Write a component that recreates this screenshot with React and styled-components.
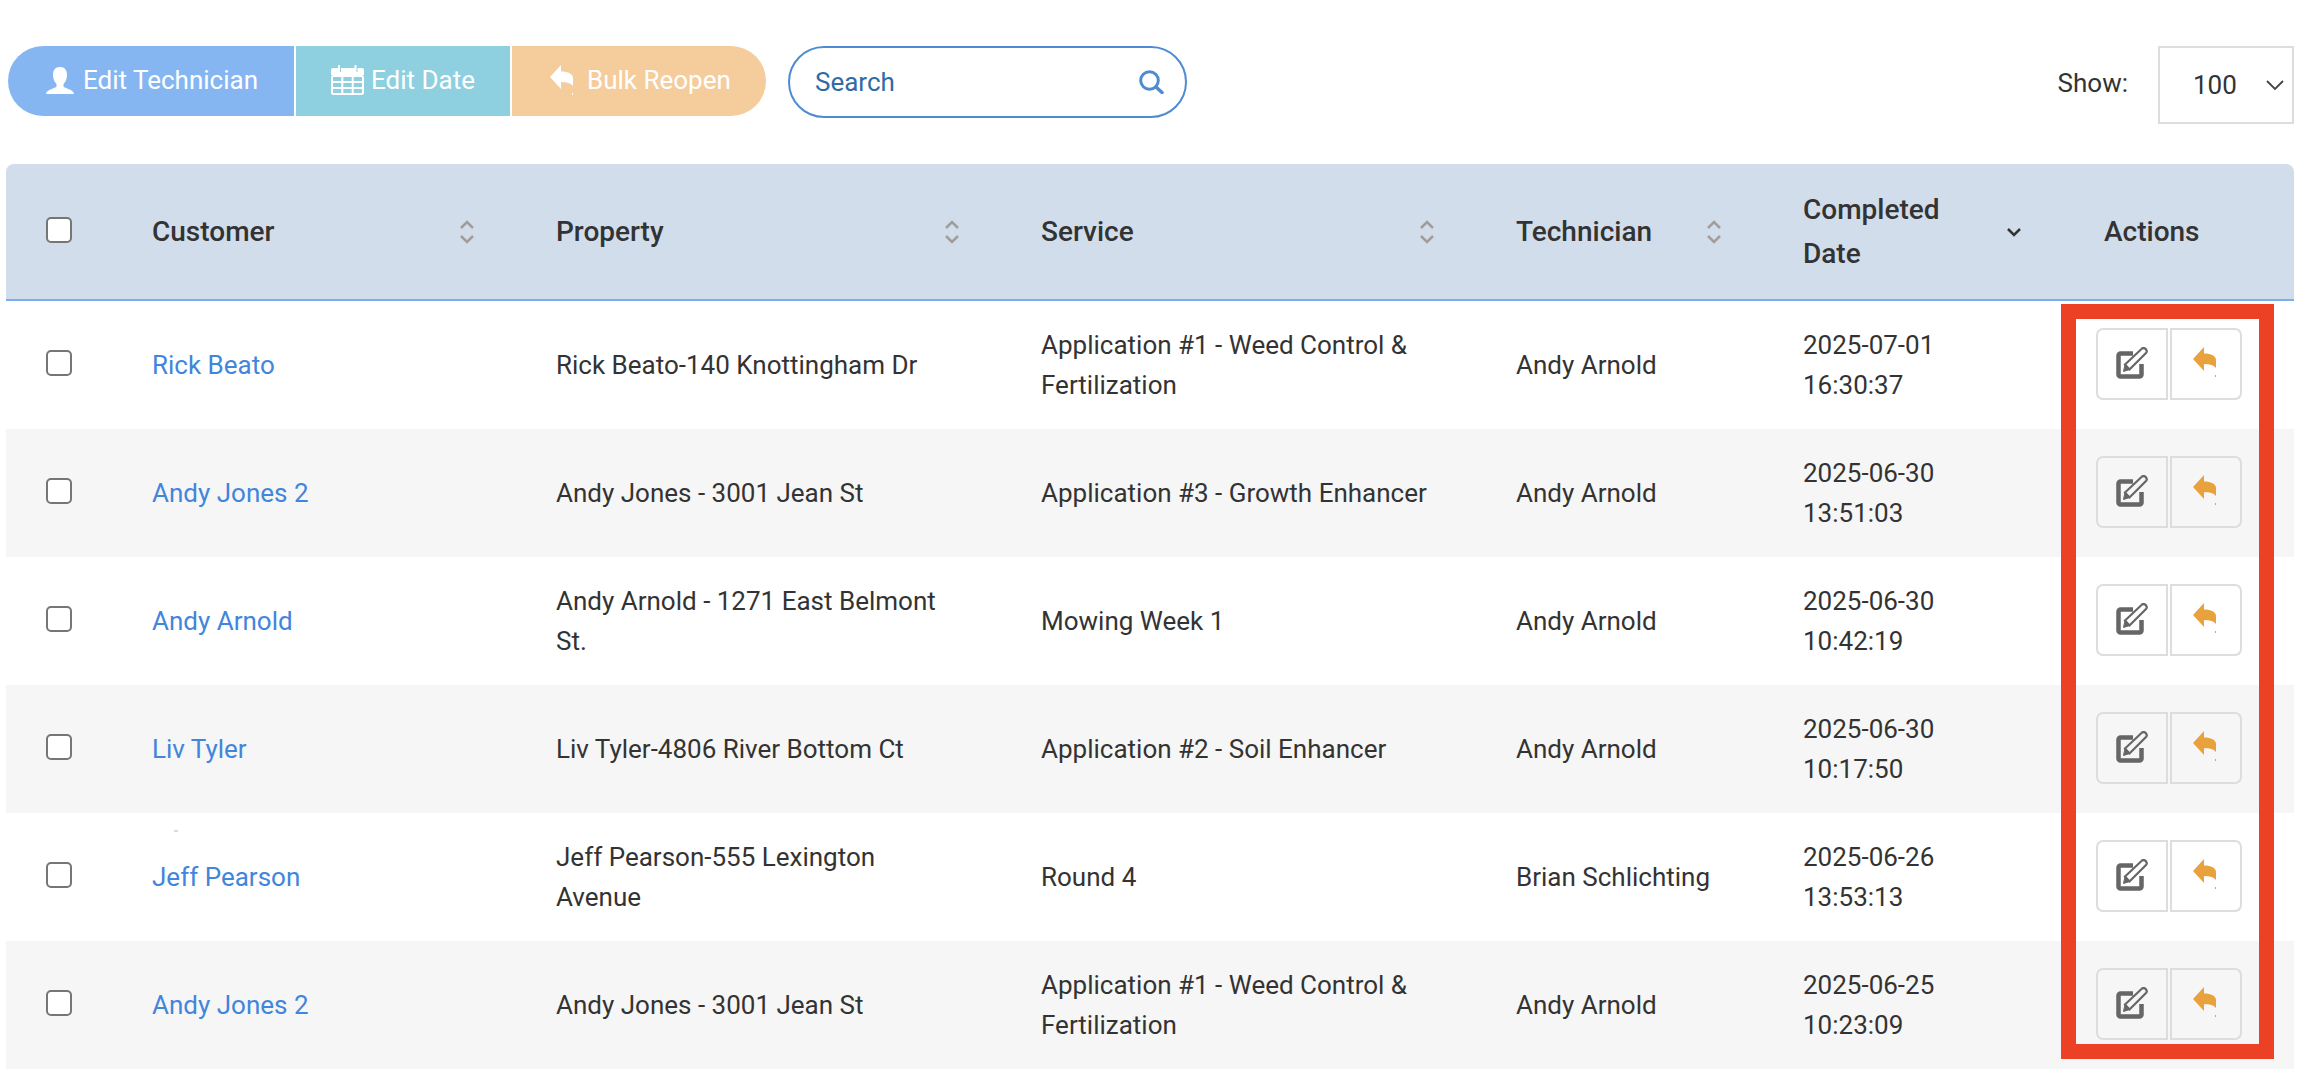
import React from 'react';
import styled, { createGlobalStyle } from 'styled-components';

const GlobalStyle = createGlobalStyle`
  html, body {
    margin: 0;
    background: #fff;
    font-family: Roboto, "Liberation Sans", sans-serif;
    color: #333;
  }
`;

const Page = styled.div`
  position: relative;
  width: 2312px;
  height: 1070px;
  overflow: hidden;
`;

const Toolbar = styled.div`
  display: flex;
  align-items: flex-start;
  height: 118px;
  padding: 46px 18px 0 8px;
  box-sizing: border-box;
`;

const BulkGroup = styled.div`
  display: flex;
  gap: 2px;
  height: 70px;
`;

const BulkButton = styled.button`
  display: flex;
  align-items: center;
  gap: ${(p) => p.$gap}px;
  width: ${(p) => p.$w}px;
  height: 70px;
  padding: 0 0 2px ${(p) => p.$pad}px;
  box-sizing: border-box;
  border: 0;
  border-radius: ${(p) => p.$radius || '0'};
  background: ${(p) => p.$bg};
  color: #fff;
  font-family: inherit;
  font-size: 26px;
`;

const SearchBox = styled.div`
  display: flex;
  align-items: center;
  justify-content: space-between;
  width: 399px;
  height: 72px;
  margin-left: 22px;
  padding: 0 21px 0 25px;
  box-sizing: border-box;
  border: 2px solid #4d8bd3;
  border-radius: 36px;
  color: #2f6ba5;
  font-size: 26px;
`;

const ShowArea = styled.div`
  display: flex;
  align-items: flex-start;
  margin-left: auto;
`;

const ShowLabel = styled.span`
  margin: 22px 30px 0 0;
  font-size: 26px;
  line-height: 30px;
`;

const ShowSelect = styled.div`
  display: flex;
  align-items: center;
  justify-content: space-between;
  width: 136px;
  height: 78px;
  padding: 0 8px 0 33px;
  box-sizing: border-box;
  border: 2px solid #ddd;
  font-size: 26px;
`;

const Table = styled.table`
  width: 2288px;
  margin-left: 6px;
  margin-top: 46px;
  border-collapse: separate;
  border-spacing: 0;
  table-layout: fixed;
  font-size: 26px;
`;

const Head = styled.th`
  width: ${(p) => p.$w}px;
  height: 137px;
  padding: 0 0 0 ${(p) => p.$pad ?? 30}px;
  box-sizing: border-box;
  background: #d2ddec;
  border-bottom: 2px solid #7aaef0;
  text-align: left;
  font-size: 28px;
  font-weight: 500;
  line-height: 44px;
  color: #333;

  &:first-child { border-top-left-radius: 8px; }
  &:last-child { border-top-right-radius: 8px; }
`;

const HeadInner = styled.div`
  display: flex;
  align-items: center;
  justify-content: space-between;
  padding-right: 52px;
`;

const Row = styled.tr`
  background: ${(p) => (p.$alt ? '#f6f6f6' : '#fff')};
`;

const Cell = styled.td`
  height: 128px;
  padding: 0 50px 0 ${(p) => p.$pad ?? 30}px;
  box-sizing: border-box;
  line-height: 40px;
  color: #333;
`;

const CheckCell = styled.div`
  display: flex;
  margin: 0 0 4px 40px;
`;

const Check = styled.input.attrs({ type: 'checkbox' })`
  appearance: none;
  width: 26px;
  height: 26px;
  margin: 0;
  border: 2px solid #767676;
  border-radius: 5px;
  background: #fff;
`;

const CustomerLink = styled.a`
  color: #4285dc;
  text-decoration: none;
`;

const ActionGroup = styled.div`
  display: flex;
  gap: 2px;
  margin-bottom: 3px;
`;

const ActionButton = styled.button`
  display: flex;
  justify-content: center;
  align-items: flex-start;
  width: 72px;
  height: 72px;
  padding: 17px ${(p) => (p.$first ? 0 : 4)}px 0 0;
  box-sizing: border-box;
  border: 2px solid #ddd;
  border-radius: ${(p) => (p.$first ? '7px 0 0 7px' : '0 7px 7px 0')};
  background: transparent;
`;

const Highlight = styled.div`
  position: absolute;
  left: 2061px;
  top: 304px;
  width: 213px;
  height: 755px;
  box-sizing: border-box;
  border: 15px solid #ec4125;
  pointer-events: none;
`;

const Speck = styled.div`
  position: absolute;
  left: 174px;
  top: 830px;
  width: 4px;
  height: 2px;
  background: #d2ddec;
`;

const PersonIcon = () => (
  <svg width="28" height="27" viewBox="0 0 28 27" fill="#fff">
    <path d="M14 0c-5 0-7 3.5-7 8 0 4 1.5 6.800 3.500 9v2.500C9.500 21.500.5 22 0 27h28c-.5-5-9.500-5.500-10.500-7.500V17c2-2.200 3.500-5 3.500-9 0-4.500-2-8-7-8z" />
  </svg>
);

const CalendarIcon = ({ bg }) => (
  <svg width="33" height="30" viewBox="0 0 33 30" fill="none">
    <path d="M2 3h29a2 2 0 0 1 2 2v5H0V5a2 2 0 0 1 2-2z" fill="#fff" />
    <path d="M8 0v7M24.500 0v7" stroke="#fff" strokeWidth="2" />
    <path d="M8 3v4M24.500 3v4" stroke={bg} strokeWidth="1" transform="translate(1.500 0)" />
    <rect x="1" y="11" width="31" height="18" rx="1.500" stroke="#fff" strokeWidth="2" />
    <path d="M11.300 11v18M21.700 11v18M1 17h31M1 23h31" stroke="#fff" strokeWidth="2" />
  </svg>
);

const ReplyIcon = ({ color }) => (
  <svg width="23" height="31" viewBox="0 0 23 31" fill={color}>
    <path d="M0 12 11 0v6.500c7 0 12 2.500 12 6.500v8c-2-2.500-6-4-12-4v7z" />
    <rect x="22" y="28" width="1" height="2" />
  </svg>
);

const EditIcon = () => (
  <svg width="32" height="32" viewBox="0 0 32 32" fill="none" stroke="#666">
    <path d="M17 6.500H4.500a2 2 0 0 0-2 2V27.500a2 2 0 0 0 2 2H23.500a2 2 0 0 0 2-2V17" strokeWidth="4.500" />
    <path d="M9 17.500 26 1.500q2-1.300 4 .8 1.500 2 0 3.700L13.500 22.500z" strokeWidth="2.200" />
    <path d="M7.500 24.500 9 17.500l4.500 5z" fill="#666" strokeWidth="1" />
  </svg>
);

const SearchIcon = () => (
  <svg width="25" height="24" viewBox="0 0 25 24" fill="none" stroke="#4d8bd3">
    <circle cx="10.500" cy="10.500" r="8.800" strokeWidth="3" />
    <path d="M17 17l6 5.500" strokeWidth="3.500" strokeLinecap="round" />
  </svg>
);

const SortIcon = () => (
  <svg width="14" height="24" viewBox="0 0 14 24" fill="none" stroke="#a19e9a" strokeWidth="2.500">
    <path d="M1 8l6-6 6 6M1 16l6 6 6-6" />
  </svg>
);

const SortedIcon = () => (
  <svg width="14" height="10" viewBox="0 0 14 10" fill="none" stroke="#333" strokeWidth="2.500">
    <path d="M1 2l6 6 6-6" />
  </svg>
);

const SelectChevron = () => (
  <svg width="18" height="10" viewBox="0 0 18 10" fill="none" stroke="#444" strokeWidth="1.800">
    <path d="M1 1l8 8 8-8" />
  </svg>
);

const rows = [
  ['Rick Beato', 'Rick Beato-140 Knottingham Dr', 'Application #1 - Weed Control & Fertilization', 'Andy Arnold', '2025-07-01 16:30:37'],
  ['Andy Jones 2', 'Andy Jones - 3001 Jean St', 'Application #3 - Growth Enhancer', 'Andy Arnold', '2025-06-30 13:51:03'],
  ['Andy Arnold', 'Andy Arnold - 1271 East Belmont St.', 'Mowing Week 1', 'Andy Arnold', '2025-06-30 10:42:19'],
  ['Liv Tyler', 'Liv Tyler-4806 River Bottom Ct', 'Application #2 - Soil Enhancer', 'Andy Arnold', '2025-06-30 10:17:50'],
  ['Jeff Pearson', 'Jeff Pearson-555 Lexington Avenue', 'Round 4', 'Brian Schlichting', '2025-06-26 13:53:13'],
  ['Andy Jones 2', 'Andy Jones - 3001 Jean St', 'Application #1 - Weed Control & Fertilization', 'Andy Arnold', '2025-06-25 10:23:09'],
];

const App = () => {
  return (
    <Page>
      <GlobalStyle />
      <Toolbar>
        <BulkGroup>
          <BulkButton $w={286} $pad={38} $gap={9} $bg="#86b6f2" $radius="35px 0 0 35px">
            <PersonIcon />
            Edit Technician
          </BulkButton>
          <BulkButton $w={214} $pad={35} $gap={7} $bg="#8fd0e0">
            <CalendarIcon bg="#8fd0e0" />
            Edit Date
          </BulkButton>
          <BulkButton $w={254} $pad={38} $gap={14} $bg="#f5cd9c" $radius="0 35px 35px 0">
            <ReplyIcon color="#fff" />
            Bulk Reopen
          </BulkButton>
        </BulkGroup>
        <SearchBox>
          Search
          <SearchIcon />
        </SearchBox>
        <ShowArea>
          <ShowLabel>Show:</ShowLabel>
          <ShowSelect>
            100
            <SelectChevron />
          </ShowSelect>
        </ShowArea>
      </Toolbar>
      <Table>
        <thead>
          <tr>
            <Head $w={116} $pad={0}>
              <CheckCell><Check /></CheckCell>
            </Head>
            <Head $w={404}><HeadInner>Customer<SortIcon /></HeadInner></Head>
            <Head $w={485}><HeadInner>Property<SortIcon /></HeadInner></Head>
            <Head $w={475}><HeadInner>Service<SortIcon /></HeadInner></Head>
            <Head $w={287}><HeadInner>Technician<SortIcon /></HeadInner></Head>
            <Head $w={300}><HeadInner><span>Completed<br />Date</span><SortedIcon /></HeadInner></Head>
            <Head $w={221} $pad={31}>Actions</Head>
          </tr>
        </thead>
        <tbody>
          {rows.map((row, i) => (
            <Row key={i} $alt={i % 2 === 1}>
              <Cell $pad={0}>
                <CheckCell><Check /></CheckCell>
              </Cell>
              <Cell><CustomerLink href="#">{row[0]}</CustomerLink></Cell>
              <Cell>{row[1]}</Cell>
              <Cell>{row[2]}</Cell>
              <Cell>{row[3]}</Cell>
              <Cell>{row[4]}</Cell>
              <Cell $pad={23}>
                <ActionGroup>
                  <ActionButton $first><EditIcon /></ActionButton>
                  <ActionButton><ReplyIcon color="#e9a23b" /></ActionButton>
                </ActionGroup>
              </Cell>
            </Row>
          ))}
        </tbody>
      </Table>
      <Highlight />
      <Speck />
    </Page>
  );
};

export default App;
